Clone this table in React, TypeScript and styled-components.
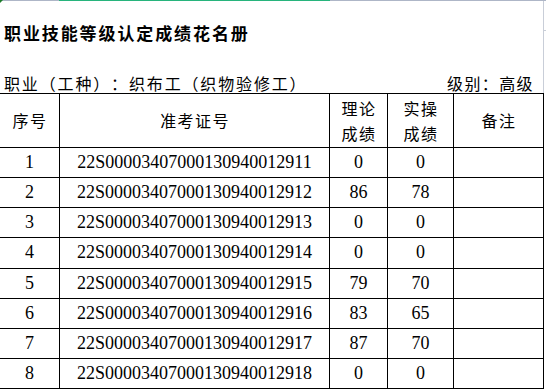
import React from "react";
import styled, { createGlobalStyle } from "styled-components";

const Global = createGlobalStyle`
  html, body { margin: 0; padding: 0; background: #ffffff; }
  body {
    font-family: "Noto Sans CJK SC", "Noto Sans", sans-serif;
    color: #000;
    text-spacing-trim: space-all;
  }
`;

const Page = styled.div`
  width: 546px;
  height: 390px;
  overflow: hidden;
  background: #fff;
  position: relative;
`;

const TopBar = styled.div`
  display: flex;
  height: 1px;
  position: relative;
`;

const BarSegment = styled.div<{ $w?: number; $active?: boolean }>`
  height: 1px;
  flex: ${(p) => (p.$w ? `0 0 ${p.$w}px` : "1 1 auto")};
  background: ${(p) => (p.$active ? "#27b47c" : "#aeb6c7")};
`;

const CornerMark = styled.div`
  position: absolute;
  left: 0;
  top: 0;
  width: 0;
  height: 0;
  border-top: 3px solid #1d7d2a;
  border-right: 3px solid transparent;
`;

const Heading = styled.div`
  width: 544px;
  box-sizing: border-box;
  border-right: 1px solid #c9ced8;
  position: relative;
  &::after {
    content: "";
    position: absolute;
    right: -3px;
    top: 29px;
    width: 2px;
    height: 1px;
    background: #c9ced8;
  }
`;

const Title = styled.div`
  height: 63px;
  line-height: 63px;
  padding-left: 4px;
  font-size: 17px;
  font-weight: 700;
  letter-spacing: 1.9px;
  white-space: nowrap;
`;

const InfoRow = styled.div`
  height: 29px;
  display: flex;
  align-items: flex-end;
  justify-content: space-between;
  padding: 0 9px 0 4px;
  font-size: 16px;
  line-height: 20px;
  white-space: nowrap;
  text-spacing-trim: space-all;
`;

const InfoText = styled.span<{ $spacing: number }>`
  letter-spacing: ${(p) => p.$spacing}px;
`;

const Sheet = styled.div`
  display: grid;
  grid-template-columns: 60px 270px 58px 66px 90px;
  grid-template-rows: 54px repeat(8, 30.125px);
  border-top: 1px solid #000;
  width: 544px;
`;

const Cell = styled.div<{ $serif?: boolean }>`
  box-sizing: border-box;
  border-right: 1px solid #000;
  border-bottom: 1px solid #000;
  display: flex;
  align-items: center;
  justify-content: center;
  text-align: center;
  white-space: nowrap;
  font-family: ${(p) =>
    p.$serif
      ? `"Liberation Serif", "Times New Roman", serif`
      : `"Noto Sans CJK SC", "Noto Sans", sans-serif`};
  font-size: ${(p) => (p.$serif ? "18px" : "16px")};
  letter-spacing: ${(p) => (p.$serif ? "0" : "1.4px")};
`;

const HeadText = styled.div`
  line-height: 25px;
  padding-left: 1px;
`;

const rows: [number, string, string, string][] = [
  [1, "22S00003407000130940012911", "0", "0"],
  [2, "22S00003407000130940012912", "86", "78"],
  [3, "22S00003407000130940012913", "0", "0"],
  [4, "22S00003407000130940012914", "0", "0"],
  [5, "22S00003407000130940012915", "79", "70"],
  [6, "22S00003407000130940012916", "83", "65"],
  [7, "22S00003407000130940012917", "87", "70"],
  [8, "22S00003407000130940012918", "0", "0"],
];

export default function App() {
  return (
    <>
      <Global />
      <Page>
        <TopBar>
          <BarSegment $w={59} />
          <BarSegment $w={271} $active />
          <BarSegment />
          <CornerMark />
        </TopBar>
        <Heading>
          <Title>职业技能等级认定成绩花名册</Title>
          <InfoRow>
            <InfoText $spacing={1.85}>职业（工种）：织布工（织物验修工）</InfoText>
            <InfoText $spacing={1.4}>级别：高级</InfoText>
          </InfoRow>
        </Heading>
        <Sheet>
          <Cell>
            <HeadText>序号</HeadText>
          </Cell>
          <Cell>
            <HeadText>准考证号</HeadText>
          </Cell>
          <Cell>
            <HeadText>
              理论
              <br />
              成绩
            </HeadText>
          </Cell>
          <Cell>
            <HeadText>
              实操
              <br />
              成绩
            </HeadText>
          </Cell>
          <Cell>
            <HeadText>备注</HeadText>
          </Cell>
          {rows.map(([n, id, a, b]) => (
            <React.Fragment key={n}>
              <Cell $serif>{n}</Cell>
              <Cell $serif>{id}</Cell>
              <Cell $serif>{a}</Cell>
              <Cell $serif>{b}</Cell>
              <Cell $serif />
            </React.Fragment>
          ))}
        </Sheet>
      </Page>
    </>
  );
}
